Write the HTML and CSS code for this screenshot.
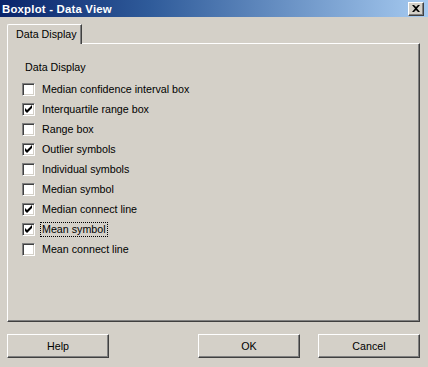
FILE: index.html
```html
<!DOCTYPE html>
<html>
  <head>
    <link rel="stylesheet" href="styles.css">
  </head>
  <body>
    <div class="window">
      <div class="titlebar">
        <span class="title">Boxplot - Data View</span>
        <span class="close">
          <svg width="8" height="7" viewBox="0 0 8 7"><path d="M0 0h2l2 2 2-2h2L5 3.5 8 7H6L4 5 2 7H0l3-3.5z" fill="#000"/></svg>
        </span>
      </div>

      <div class="content">
        <div class="tabs">
          <div class="tab">Data Display</div>
        </div>

        <div class="panel">
          <div class="group-label">Data Display</div>
          <ul class="options">
            <li class="option"><span class="box"></span><span class="label">Median confidence interval box</span></li>
            <li class="option"><span class="box checked"></span><span class="label">Interquartile range box</span></li>
            <li class="option"><span class="box"></span><span class="label">Range box</span></li>
            <li class="option"><span class="box checked"></span><span class="label">Outlier symbols</span></li>
            <li class="option"><span class="box"></span><span class="label">Individual symbols</span></li>
            <li class="option"><span class="box"></span><span class="label">Median symbol</span></li>
            <li class="option"><span class="box checked"></span><span class="label">Median connect line</span></li>
            <li class="option"><span class="box checked"></span><span class="label focus">Mean symbol</span></li>
            <li class="option"><span class="box"></span><span class="label">Mean connect line</span></li>
          </ul>
        </div>

        <div class="buttons">
          <button class="btn" type="button">Help</button>
          <div class="btn-group">
            <button class="btn" type="button">OK</button>
            <button class="btn" type="button">Cancel</button>
          </div>
        </div>
      </div>
    </div>
  </body>
</html>
```

FILE: styles.css
```css
body{
  margin:0;
  background-color:#d4d0c8;
  font-family:"Liberation Sans", Arial, sans-serif;
  font-size:10.7px;
  color:#000;
}

.window{
  width:428px;
  height:367px;
  overflow:hidden;
}

.titlebar{
  height:17px;
  display:flex;
  align-items:center;
  justify-content:space-between;
  padding:0 4px 0 2px;
  background:linear-gradient(to right, #0a246a 0%, #2f5b9a 35%, #a6caf0 100%);
}

.title{
  color:#fff;
  font-weight:bold;
  font-size:11.4px;
  letter-spacing:0.2px;
}

.close{
  width:16px;
  height:14px;
  display:flex;
  align-items:center;
  justify-content:center;
  background-color:#d4d0c8;
  box-sizing:border-box;
  border:1px solid;
  border-color:#fff #404040 #404040 #fff;
  box-shadow:inset -1px -1px 0 #808080;
}

.content{
  padding:7px 8px 0 7px;
}

.tabs{
  display:flex;
  height:20px;
}

.tab{
  width:75px;
  box-sizing:border-box;
  padding:3px 0 0 8px;
  border-top:1px solid #fff;
  border-left:1px solid #fff;
  border-right:1px solid #404040;
  border-top-left-radius:2px;
  box-shadow:inset -1px 0 0 #808080;
  position:relative;
  z-index:1;
  background-color:#d4d0c8;
}

.panel{
  height:279px;
  box-sizing:border-box;
  border:1px solid;
  border-color:#fff #404040 #404040 #fff;
  box-shadow:inset -1px -1px 0 #808080;
  margin-top:-1px;
  padding:13px 0 0 14px;
}

.group-label{
  height:22px;
  line-height:20px;
  padding-left:3px;
}

.options{
  list-style:none;
  margin:0;
  padding:0;
}

.option{
  display:flex;
  align-items:center;
  height:20px;
}

.box{
  width:13px;
  height:13px;
  box-sizing:border-box;
  background-color:#fff;
  border:1px solid;
  border-color:#808080 #fff #fff #808080;
  box-shadow:inset 1px 1px 0 #404040, inset -1px -1px 0 #d4d0c8;
  margin-right:6px;
}

.box.checked{
  background-image:url("data:image/svg+xml;utf8,<svg xmlns='http://www.w3.org/2000/svg' width='11' height='11' viewBox='0 0 11 11'><path d='M2 4v3l2 2 5-5V1L4 6z' fill='black'/></svg>");
  background-repeat:no-repeat;
  background-position:0 0;
}

.label{
  line-height:13px;
  padding:0 1px;
}

.label.focus{
  outline:1px dotted #000;
  outline-offset:0;
}

.buttons{
  display:flex;
  justify-content:space-between;
  margin-top:12px;
}

.btn-group{
  display:flex;
  gap:18px;
}

.btn{
  width:102px;
  height:24px;
  background-color:#d4d0c8;
  font-family:"Liberation Sans", Arial, sans-serif;
  font-size:10.7px;
  color:#000;
  border:1px solid;
  border-color:#fff #404040 #404040 #fff;
  box-shadow:inset -1px -1px 0 #808080;
  padding:0;
}
```
